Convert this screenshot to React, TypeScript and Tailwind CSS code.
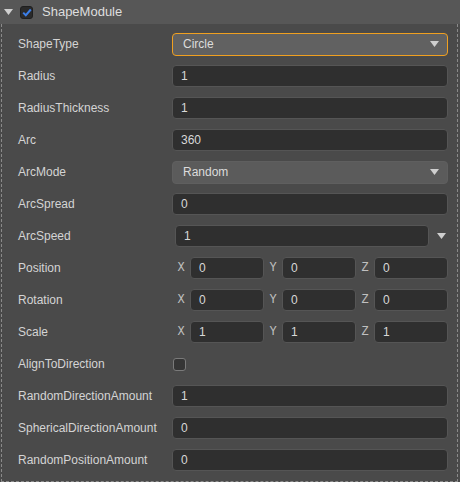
import React from "react";

const font = { fontFamily: '"Liberation Sans", Arial, sans-serif' };

function Label({ children }: { children: React.ReactNode }) {
  return <div className="w-[154px] shrink-0 text-[12px] text-[#d4d4d4]">{children}</div>;
}

function Input({ value, className = "" }: { value: string; className?: string }) {
  return (
    <div className={`h-[22px] flex items-center rounded-[4px] border border-[#555555] bg-[#2f2f2f] pl-[8px] text-[12px] text-[#d8d8d8] ${className}`}>
      {value}
    </div>
  );
}

function Tri({ className = "" }: { className?: string }) {
  return (
    <svg width="9" height="6" viewBox="0 0 9 6" className={className}>
      <polygon points="0,0 9,0 4.5,6" fill="#cfcfcf" />
    </svg>
  );
}

function Row({ label, children }: { label: string; children: React.ReactNode }) {
  return (
    <div className="h-[32px] flex items-center">
      <Label>{label}</Label>
      <div className="w-[276px] flex items-center">{children}</div>
    </div>
  );
}

function Vec({ v }: { v: [string, string, string] }) {
  const axes = ["X", "Y", "Z"];
  return (
    <div className="flex w-full">
      {axes.map((a, i) => (
        <div key={a} className="w-[92px] flex items-center">
          <div className="w-[18px] text-center text-[12px] text-[#c0c0c0] font-['Liberation_Mono',monospace]">
            {a}
          </div>
          <Input value={v[i]} className="w-[74px]" />
        </div>
      ))}
    </div>
  );
}

export default function App() {
  return (
    <div className="w-[460px] h-[482px] bg-[#4a4a4a] flex flex-col" style={font}>
      <div className="h-[24px] bg-[#575757] flex items-center shrink-0">
        <Tri className="ml-[4px]" />
        <div className="ml-[7px] w-[13px] h-[13px] rounded-[3px] bg-[#2a2a2a] border border-[#1f1f1f] flex items-center justify-center">
          <svg width="10" height="9" viewBox="0 0 10 9">
            <polyline points="1.2,4.6 3.8,7.2 8.8,1.5" fill="none" stroke="#3b7ee8" strokeWidth="2" />
          </svg>
        </div>
        <div className="ml-[9px] text-[13px] text-[#dedede]">ShapeModule</div>
      </div>
      <div className="ml-[1px] w-[457px] flex-1 border-x border-b border-dashed border-[#8a8a8a] pl-[16px] pt-[4px]">
        <Row label="ShapeType">
          <div className="w-full h-[23px] rounded-[4px] border border-[#f0a020] bg-[#616161] flex items-center justify-between pl-[10px] pr-[8px] text-[12px] text-[#dcdcdc]">
            Circle
            <Tri />
          </div>
        </Row>
        <Row label="Radius"><Input value="1" className="w-full" /></Row>
        <Row label="RadiusThickness"><Input value="1" className="w-full" /></Row>
        <Row label="Arc"><Input value="360" className="w-full" /></Row>
        <Row label="ArcMode">
          <div className="w-full h-[23px] rounded-[4px] border border-[#5f5f5f] bg-[#5b5b5b] flex items-center justify-between pl-[10px] pr-[8px] text-[12px] text-[#dcdcdc]">
            Random
            <Tri />
          </div>
        </Row>
        <Row label="ArcSpread"><Input value="0" className="w-full" /></Row>
        <Row label="ArcSpeed">
          <div className="flex items-center w-full pl-[3px]">
            <Input value="1" className="w-[254px]" />
            <Tri className="ml-[8px]" />
          </div>
        </Row>
        <Row label="Position"><Vec v={["0", "0", "0"]} /></Row>
        <Row label="Rotation"><Vec v={["0", "0", "0"]} /></Row>
        <Row label="Scale"><Vec v={["1", "1", "1"]} /></Row>
        <Row label="AlignToDirection">
          <div className="ml-[1px] w-[13px] h-[13px] rounded-[3px] border border-[#7a7a7a] bg-[#353535]" />
        </Row>
        <Row label="RandomDirectionAmount"><Input value="1" className="w-full" /></Row>
        <Row label="SphericalDirectionAmount"><Input value="0" className="w-full" /></Row>
        <Row label="RandomPositionAmount"><Input value="0" className="w-full" /></Row>
      </div>
    </div>
  );
}
